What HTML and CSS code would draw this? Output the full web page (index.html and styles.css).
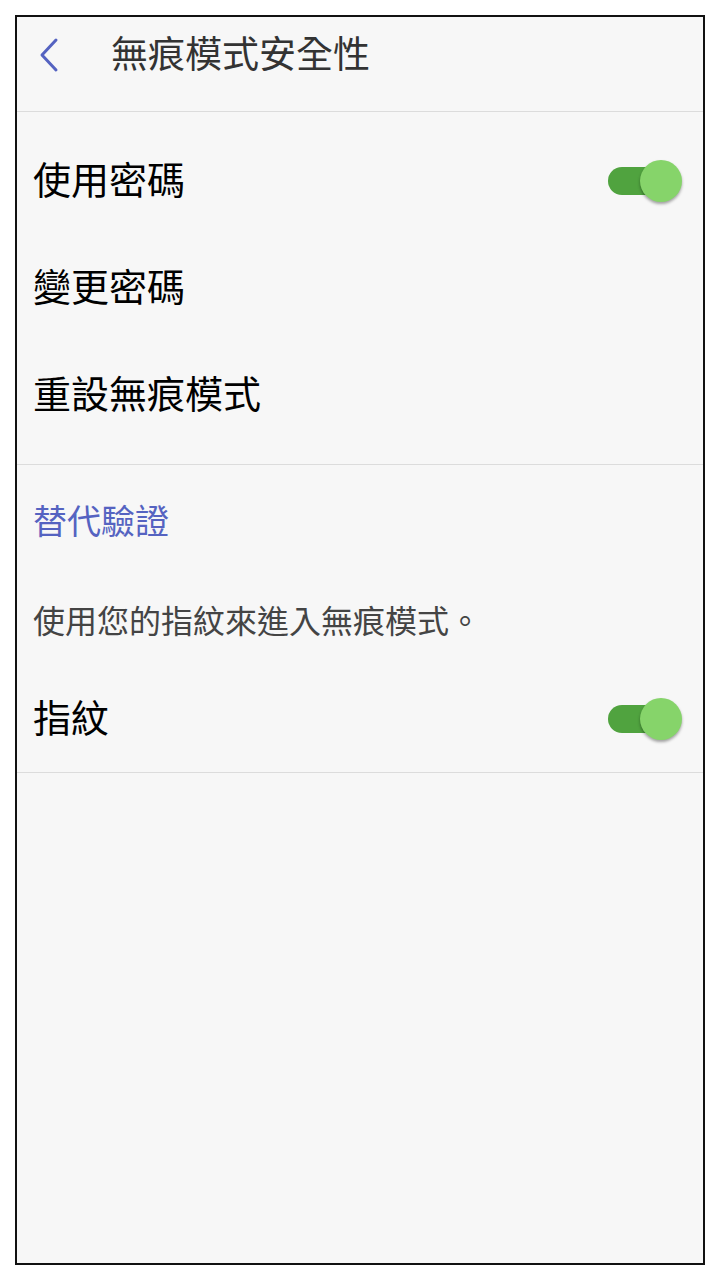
FILE: index.html
```html
<!DOCTYPE html>
<html lang="zh-Hant">
<head>
<meta charset="UTF-8">
<link rel="stylesheet" href="styles.css">
</head>
<body>

    <div class="screen">

        <div class="header">
            <svg class="back" width="24" height="36" viewBox="0 0 24 36">
                <path d="M19 3 L5 18 L19 33" fill="none" stroke="#5563c1" stroke-width="3" stroke-linecap="round" stroke-linejoin="round"/>
            </svg>
            <span class="title">無痕模式安全性</span>
        </div>

        <div class="section first">
            <div class="row">
                <span class="label">使用密碼</span>
                <div class="toggle"><div class="track"></div><div class="knob"></div></div>
            </div>
            <div class="row">
                <span class="label">變更密碼</span>
            </div>
            <div class="row">
                <span class="label">重設無痕模式</span>
            </div>
        </div>

        <div class="section">
            <div class="category">替代驗證</div>
            <div class="desc">使用您的指紋來進入無痕模式。</div>
            <div class="row">
                <span class="label">指紋</span>
                <div class="toggle"><div class="track"></div><div class="knob"></div></div>
            </div>
        </div>

    </div>

</body>
</html>
```

FILE: styles.css
```css
body {
    margin: 0;
    background: #ffffff;
    font-family: "Noto Sans CJK TC", "Noto Sans", sans-serif;
}

.screen {
    box-sizing: border-box;
    width: 690px;
    height: 1250px;
    margin: 15px 0 0 15px;
    border: 2px solid #111;
    background: #f7f7f7;
}

.header {
    box-sizing: border-box;
    height: 95px;
    display: flex;
    align-items: flex-start;
    padding: 16px 0 0 20px;
    border-bottom: 1px solid #dcdcdc;
}
.header .back {
    margin-top: 4px;
}
.header .title {
    margin-left: 50px;
    margin-top: -3px;
    font-size: 37px;
    line-height: 44px;
    color: #333;
}

.section {
    border-bottom: 1px solid #dcdcdc;
}
.section.first {
    padding: 15px 0 16px;
}

.row {
    height: 107px;
    display: flex;
    align-items: center;
    justify-content: space-between;
    padding: 0 21px 0 16px;
}
.row .label {
    margin-bottom: 6px;
    font-size: 38px;
    color: #000;
}

.category {
    box-sizing: border-box;
    height: 114px;
    display: flex;
    align-items: center;
    padding: 0 0 5px 16px;
    font-size: 34px;
    color: #5563c1;
}

.desc {
    box-sizing: border-box;
    height: 86px;
    display: flex;
    align-items: center;
    padding: 0 0 6px 16px;
    font-size: 32px;
    color: #444;
}

.toggle {
    position: relative;
    width: 74px;
    height: 42px;
}
.toggle .track {
    position: absolute;
    left: 0;
    top: 7px;
    width: 62px;
    height: 28px;
    border-radius: 14px;
    background: #50a33f;
}
.toggle .knob {
    position: absolute;
    right: 0;
    top: 0;
    width: 42px;
    height: 42px;
    border-radius: 50%;
    background: #86d46a;
    box-shadow: 0 2px 3px rgba(0, 0, 0, 0.35);
}
```
